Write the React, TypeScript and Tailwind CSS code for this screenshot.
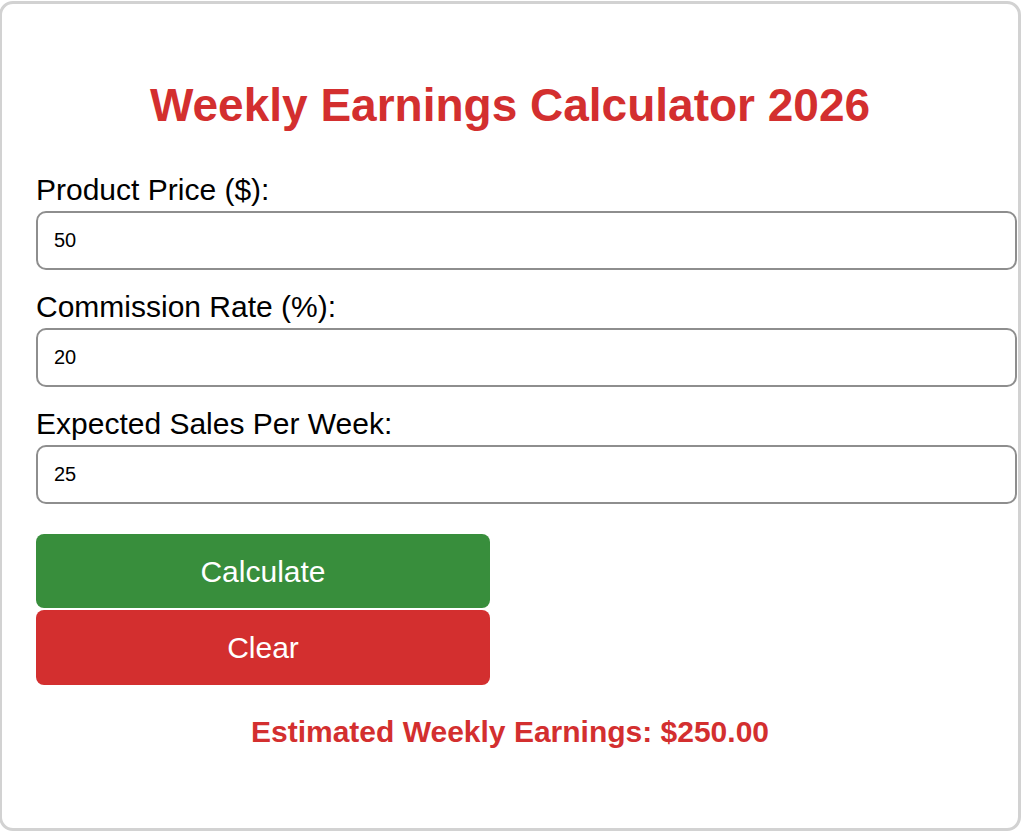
import { useState } from "react";

// ─── Field row ────────────────────────────────────────────────────────────────
function Field({
  label,
  value,
  onChange,
}: {
  label: string;
  value: string;
  onChange: (v: string) => void;
}) {
  return (
    <div className="flex flex-col">
      <label className="text-[30px] leading-[30px] text-black">{label}</label>
      <input
        type="number"
        value={value}
        onChange={(e) => onChange(e.target.value)}
        className="mt-[6px] w-[981px] h-[59px] shrink-0 rounded-[10px] border-2 border-[#8e8e8e] bg-white px-[16px] text-[20px] text-black outline-none"
      />
    </div>
  );
}

// ─── Main component ───────────────────────────────────────────────────────────
export default function App() {
  const [price, setPrice] = useState("50");
  const [rate, setRate] = useState("20");
  const [sales, setSales] = useState("25");
  const [result, setResult] = useState<string | null>("250.00");

  const calculate = () => {
    const p = parseFloat(price) || 0;
    const r = parseFloat(rate) || 0;
    const s = parseFloat(sales) || 0;
    setResult(((p * r) / 100 * s).toFixed(2));
  };

  const clear = () => {
    setPrice("");
    setRate("");
    setSales("");
    setResult(null);
  };

  return (
    <div
      className="min-h-[833px] bg-white"
      style={{ fontFamily: '"Liberation Sans", Arial, sans-serif' }}
    >
      <div className="mt-[1px] -ml-[1px] w-[1022px] h-[830px] rounded-[14px] border-[3px] border-[#d2d2d2] bg-white px-[34px] pt-[74px]">
        <h1 className="text-center text-[46px] leading-[54px] font-bold text-[#d32f2f]">
          Weekly Earnings Calculator 2026
        </h1>

        <div className="mt-[43px] flex flex-col gap-[22px]">
          <Field label="Product Price ($):" value={price} onChange={setPrice} />
          <Field label="Commission Rate (%):" value={rate} onChange={setRate} />
          <Field label="Expected Sales Per Week:" value={sales} onChange={setSales} />
        </div>

        <div className="mt-[30px] flex flex-col gap-[2px] w-[454px]">
          <button
            onClick={calculate}
            className="h-[74px] rounded-[8px] bg-[#388e3c] text-[30px] text-white"
          >
            Calculate
          </button>
          <button
            onClick={clear}
            className="h-[75px] rounded-[8px] bg-[#d32f2f] text-[30px] text-white"
          >
            Clear
          </button>
        </div>

        <p className="mt-[29px] text-center text-[30px] leading-[36px] font-bold text-[#d32f2f]">
          {result !== null ? `Estimated Weekly Earnings: $${result}` : "\u00a0"}
        </p>
      </div>
    </div>
  );
}
